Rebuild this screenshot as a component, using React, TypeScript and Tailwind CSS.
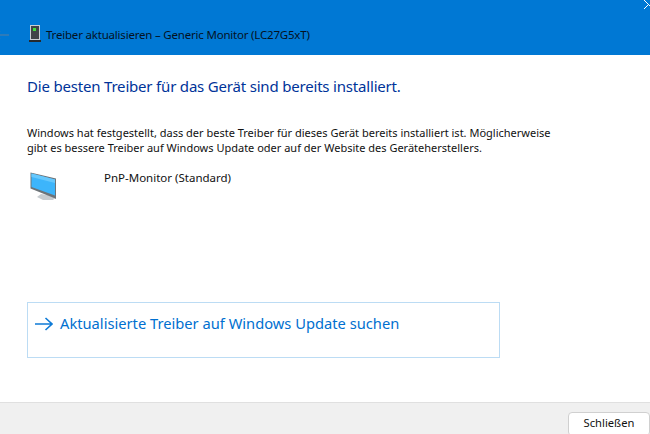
const font = "font-['Noto_Sans',sans-serif]";

function DriverIcon() {
  return (
    <svg width="16" height="20" viewBox="0 0 16 20" className="shrink-0">
      <rect x="3.5" y="1.5" width="9" height="14" fill="#3f4347" stroke="#c9ced3" strokeWidth="1" />
      <rect x="6" y="4" width="3" height="3" fill="#3ee03a" />
      <rect x="2" y="16" width="12" height="2" fill="#26292c" />
    </svg>
  );
}

function MonitorIcon() {
  return (
    <svg width="27" height="28" viewBox="0 0 27 28">
      <path d="M11 22 L18 23 L25 26 L23 28 L13 28 L7 25 Z" fill="#c7ccd0" />
      <path d="M0.5 0.5 L26 6.5 L26 27 L24 26 L0.5 16.5 Z" fill="#6d7479" />
      <path d="M1.5 1.5 L25 7.5 L25 23.5 L1.5 15 Z" fill="#3db5fb" />
      <path d="M1.5 1.5 L25 7.5 L25 11 L1.5 5 Z" fill="#66c8fd" />
    </svg>
  );
}

export default function App() {
  return (
    <div className={`relative flex h-[434px] w-[650px] flex-col overflow-hidden bg-white ${font}`}>
      <div className="flex h-[55px] shrink-0 items-end bg-[#0078d4] pb-[11px]">
        <svg width="10" height="10" viewBox="0 0 10 10" className="mb-[4px] shrink-0">
          <path d="M-4 5 L9 5 M0 1 L-4 5 L0 9" fill="none" stroke="#5a7f9f" strokeWidth="1.2" />
        </svg>
        <div className="ml-[17px]">
          <DriverIcon />
        </div>
        <span className="ml-[3px] text-[11.5px] leading-[18px] tracking-[-0.2px] text-[#04121f]">
          Treiber aktualisieren – Generic Monitor (LC27G5xT)
        </span>
      </div>

      <div className="flex flex-1 flex-col pl-[27px]">
        <h1 className="mt-[20px] text-[15px] leading-[22px] font-normal tracking-[-0.19px] text-[#003399]">
          Die besten Treiber für das Gerät sind bereits installiert.
        </h1>
        <p className="mt-[28px] text-[11px] leading-[15px] text-[#111111]">
          Windows hat festgestellt, dass der beste Treiber für dieses Gerät bereits installiert ist. Möglicherweise
          <br />
          gibt es bessere Treiber auf Windows Update oder auf der Website des Geräteherstellers.
        </p>
        <div className="mt-[15px] flex items-start">
          <div className="mt-[2px] ml-[3px] w-[74px] shrink-0">
            <MonitorIcon />
          </div>
          <span className="text-[11.5px] leading-[16px] text-[#111111]">PnP-Monitor (Standard)</span>
        </div>

        <div className="mt-[102px] flex h-[56px] w-[473px] items-start border border-[#bcdcf4] pt-[10px] pl-[7px]">
          <svg width="18" height="14" viewBox="0 0 18 14" className="mt-[4px] shrink-0">
            <path d="M0 7 L17 7 M10.5 1 L17 7 L10.5 13" fill="none" stroke="#0f7bd6" strokeWidth="1.6" />
          </svg>
          <span className="ml-[7px] text-[14.7px] leading-[20px] text-[#0070d0]">
            Aktualisierte Treiber auf Windows Update suchen
          </span>
        </div>
      </div>

      <div className="flex h-[32px] shrink-0 justify-end border-t border-[#e0e0e0] bg-[#f0f0f0] pt-[9px]">
        <button className="flex h-[24px] w-[82px] items-start justify-center rounded-[4px] border border-[#d0d0d0] bg-white text-[11.2px] leading-[20px] text-[#111111]">
          Schließen
        </button>
      </div>

      <svg width="6" height="10" viewBox="0 0 6 10" className="absolute top-0 right-0">
        <path d="M0 0 L6 6" stroke="#ffffff" strokeWidth="1" fill="none" />
        <path d="M0 9 L5 4" stroke="#ffffff" strokeWidth="1" fill="none" />
      </svg>
    </div>
  );
}
